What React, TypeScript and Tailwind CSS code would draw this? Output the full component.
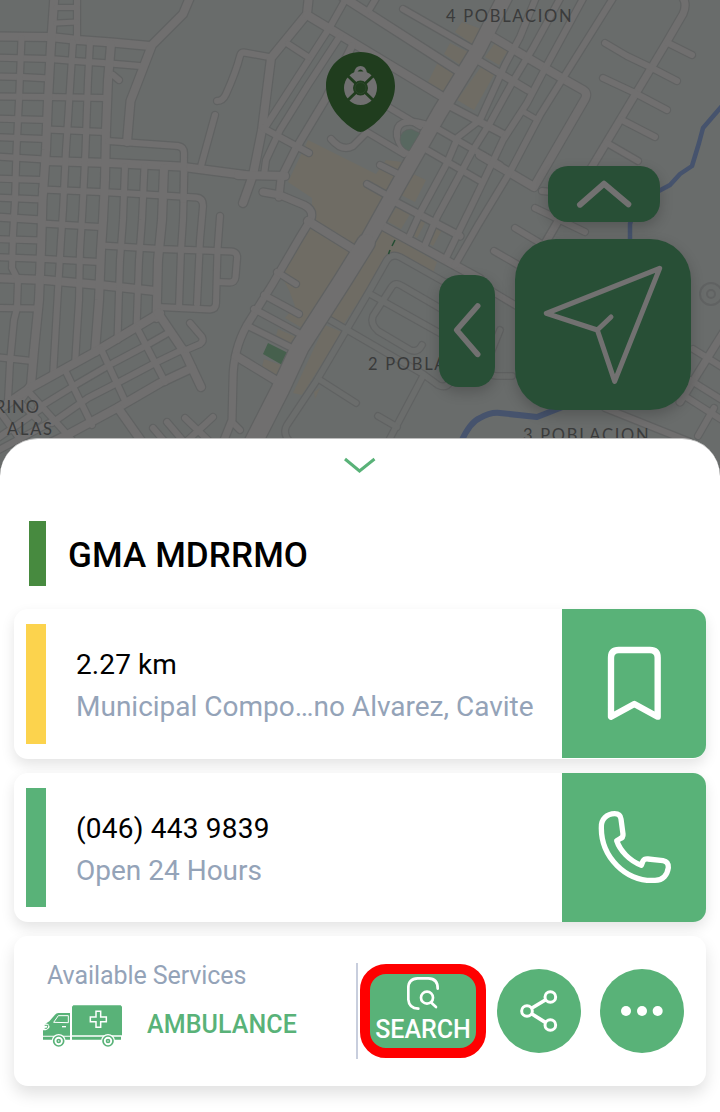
import type { ReactNode } from "react";

type Road = [width: number, d: string];

const ROADS: Road[] = [
  // western grid, east-west streets
  [8, "M-5 36.5L50 37L78 40L112 42.5L150 46"],
  [6, "M-5 57.5L50 59L75 61L110 63.5L140 66"],
  [6, "M-5 76.5L22 77L50 78.5"],
  [6, "M-5 96.5L50 97L105 98"],
  [6, "M-5 118.5L48 120"],
  [6, "M-5 137L45 139"],
  [6, "M47 129.5L105 132"],
  [6, "M-5 156.5L45 159.5"],
  [8, "M45 161L110 163L180 166.5L245 175"],
  [6, "M-5 178.5L42 180"],
  [6, "M42 189.5L100 192L130 193.5L196 197.5Q203 198 203 206L200 240L197 304"],
  [6, "M-5 197.5L42 199.5"],
  [7, "M-5 217L42 220"],
  [6, "M42 223.5L100 227"],
  [6, "M-5 239L42 240.5"],
  [6, "M-5 257L45 259L100 262"],
  [8, "M-5 278L45 280L100 285L155 291"],
  [6, "M-5 308L38 308.5"],
  [6, "M-5 357L32 361"],
  [6, "M102 245.5L160 249L231 251.5Q238 252 237 259L235.500 277Q235 283 229 282.500L217 282"],
  [6, "M158 307L210 309.500Q216 309 216 303L217.500 250L220 216"],
  // western grid, north-south streets
  [6, "M21.500 38L19 100L16.500 150L15 200L13 235L12 268L18 280L17 308L14 320L10 362L8 400"],
  [8, "M54.500 -5L51 45L48 100L46 150L42.500 200L41 250L39 300L34 350L31 385L20 400"],
  [6, "M73 42L70.500 80L68 120L66 150L63 210L61 240L58 290L53 376"],
  [6, "M90 42L88 80L85.500 150L82.500 210L80 250L79 300L75 364"],
  [8, "M111 44L108 80L106 130L105 180L103 220L101 250L99 300L95 352"],
  [6, "M125 166L123 220L120 260L117.500 340"],
  [6, "M144.500 166L142 220L139 260L136.500 328"],
  [8, "M164 168L162 220L158 260L156.500 318"],
  [6, "M184.500 166L183 220L181 250L179 307"],
  [6, "M77 -5L77 38"],
  [5, "M56 7.500L77 7.500"],
  [5, "M56 23L77 22"],
  [8, "M191 -5L183 14L152 45L130.500 101L127 142"],
  [6, "M108 141L178 146Q184 147 184 153L183.500 200"],
  [6, "M113 75L119 80"],
  [6, "M269 57L244 52.500Q241 52 240 56Q236 72 226 94Q223 101 217 101"],
  [6, "M215 115L201 166"],
  // angled blocks in the south west
  [8, "M-5 412L30 388L95 352L160 313"],
  [6, "M38 408L77 384L113 363L147 345L168 333"],
  [6, "M52 423L88 398L123 380L157 362L184 349"],
  [8, "M40 448L67 435L117 408L160 383L192 368"],
  [6, "M28 391L72 440"],
  [6, "M66 372L92 425"],
  [6, "M101 349L126 403"],
  [6, "M137 328L165 382"],
  [8, "M158 313L185 353L201 387"],
  [6, "M186 350L200 344Q204 341 202 337L190 323"],
  [8, "M118 408L142 442"],
  [6, "M-5 440L42 408"],
  [6, "M-5 452L55 420"],
  [6, "M-5 405L22 442"],
  [6, "M15 398L38 420"],
  [6, "M185 418L210 442"],
  [6, "M213 417L188 440"],
  [6, "M167 422L184 442"],
  [6, "M153 428L165 442"],
  [6, "M233 423L240 430"],
  // centre
  [8, "M309 -5L307 14L271 58L262 130L253 175L243 203"],
  [8, "M307 15L443 97"],
  [6, "M348 -5L330 27L264 129"],
  [6, "M340 36L308 85L280 130L266 160L264 175"],
  [7, "M352 46L325 100L295 150L281 178L279 197"],
  [6, "M288 44L308 57"],
  [6, "M263 128L309 153"],
  [8, "M238 175L285 176"],
  [7, "M263 192L280 195L304 205Q314 210 311 219L300 237L272 285L247 325Q233 350 233 380L232 420L222 445"],
  [8, "M340 -5L460 72"],
  [6, "M378 -5L369 10"],
  [6, "M403 9L478 52"],
  [6, "M385 105L420 126"],
  [6, "M331 139Q342 152 353 146L367 132L404 154"],
  [6, "M424 124Q395 116 397 136Q400 148 410 155"],
  [6, "M380 165L404 177"],
  [6, "M367 184L392 198"],
  [8, "M308 221L358 252"],
  [6, "M277 272L296 284"],
  [6, "M264 295L299 314"],
  [6, "M254 309L304 336"],
  [6, "M248 326L300 352"],
  [8, "M236 356L277 381"],
  // city blocks east of the avenue
  [8, "M383 226L480 279"],
  [7, "M388 198L460 236"],
  [6, "M427 150L482 182"],
  [6, "M438 129L500 165"],
  [7, "M446 104L503 134"],
  [7, "M474 58L528 90"],
  [8, "M486 33L560 77L583 90Q588 93 585 99L534 187L480 155"],
  [6, "M537 -5L520 37L505 65L480 120L458 137L447 163L420 213L410 235"],
  [6, "M562 -5L533 48L512 83L490 123L473 150L457 180L437 217L425 245"],
  [6, "M585 -5L548 63L527 103L503 140L495 157L472 205L445 260"],
  [6, "M615 -5L565 75L540 115L510 172L478 225L455 265"],
  [5, "M524 112L536 119"],
  // north-east closes
  [7, "M681 -5Q688 3 683 14L665 45L590 170L557 223L540 252"],
  [6, "M605 43L627 56L650 67L677 81"],
  [6, "M668 43L692 55"],
  [6, "M603 78L633 92L667 110"],
  [6, "M622 120L655 137"],
  [6, "M607 143L638 161"],
  [6, "M535 208L585 232"],
  [6, "M515 228L545 246"],
  [6, "M542 191L552 192"],
  [6, "M494 251L520 266"],
  [6, "M478 283L520 308"],
  [6, "M693 349L730 372"],
  [7, "M728 325L680 402"],
  [6, "M672 388L730 425"],
  [6, "M690 380L722 400"],
  [6, "M605 408L690 442"],
  [6, "M714 408L698 436"],
];

const SERVICE_ROADS: string[] = [
  "M455 288L400 257Q392 253 387 260L370 290L317 380L287 425Q282 433 290 442",
  "M330 320L423 374L438 385Q446 389 450 382",
  "M370 294L445 336",
  "M445 311L402 286Q395 281 391 288L373 316Q370 324 378 331L410 350Q418 353 422 345",
  "M320 380L356 403",
  "M423 376L388 442",
  "M378 416L397 427",
  "M500 330L488 360Q482 375 497 376L512 376",
];

function CityMap() {
  return (
    <svg viewBox="0 0 720 480" className="block h-[480px] w-[720px]" fill="none" aria-hidden="true">
      <rect width="720" height="480" fill="#696c6b" />
      <g fill="#6f6c64">
        <path d="M308 140L376 174L386 160L402 162L396 200L378 212L358 246L312 220V198L288 182Z" />
        <path d="M306 226L352 253L307 331L285 318L295 306L289 290L278 270Z" />
        <path d="M383 230L437 262L433 273L390 254L343 325L330 317Z" />
        <path d="M325 325L342 332L302 395L293 393Z" />
        <path d="M278 329L303 340L296 347L276 336Z M264 359L284 366L277 377L262 367Z" />
        <path d="M438 62L428 82L446 93L458 74Z M450 43L444 54L462 66L470 53Z M462 22L455 32L475 46L484 30Z" />
        <path d="M481 67L494 75L474 110L457 100Z M497 40L508 50L499 65L485 57Z M413 174L426 180L415 202L401 195Z" />
        <path d="M400 202L412 211L401 229L387 221Z M417 213L427 219L417 238L407 231Z M432 224L442 230L433 246L424 240Z" />
        <path d="M314 392L320 388L315 399Z" />
      </g>
      <path d="M268 343L290 354L284 366L263 354Z" fill="#46604d" />
      <g stroke="#606262" strokeLinecap="round" strokeLinejoin="round" strokeWidth="8">
        {SERVICE_ROADS.map((d) => (
          <path key={d} d={d} />
        ))}
      </g>
      <g stroke="#6b6d6c" strokeLinecap="round" strokeLinejoin="round" strokeWidth="5.600">
        {SERVICE_ROADS.map((d) => (
          <path key={d} d={d} />
        ))}
      </g>
      <g stroke="#606262" strokeLinecap="round" strokeLinejoin="round">
        {ROADS.map(([w, d]) => (
          <path key={d} d={d} strokeWidth={w + 2.4} />
        ))}
        <path d="M506 -5L478 50L440 112L400 182L365 245" strokeWidth="17" />
        <path d="M366 243L343 280L300 347L280 390L252 445" strokeWidth="20" />
        <circle cx="711" cy="294" r="11" strokeWidth="2" />
      </g>
      <g stroke="#706f6f" strokeLinecap="round" strokeLinejoin="round">
        {ROADS.map(([w, d]) => (
          <path key={d} d={d} strokeWidth={w} />
        ))}
        <path d="M506 -5L478 50L440 112L400 182L365 245" strokeWidth="14.500" />
        <path d="M366 243L343 280L300 347L280 390L252 445" strokeWidth="17.500" />
      </g>
      <path d="M400 140Q400 130 411 129L420 133L409 151Q401 148 400 140Z" fill="#586860" stroke="#606262" strokeWidth="0.700" />
      <circle cx="711" cy="294" r="4" stroke="#606262" strokeWidth="2" />
      <path d="M395 240L392 246M390 250L388.500 254" stroke="#254d33" strokeWidth="1.500" />
      <g stroke="#46536d" strokeWidth="4.500" strokeLinejoin="round">
        <path d="M722 106L703 128L699 143L692 166L680 174L670 185L655 193L636 205L630 224V245" />
        <path d="M461 442Q470 422 480 418Q490 412 500 413L537 417L565 406" strokeWidth="6" />
      </g>
      <g fill="#3a3b3b" className="font-['Lato',sans-serif] text-[16.5px]">
        <text x="446" y="21.500" textLength="125.500">4 POBLACION</text>
        <text x="368" y="369.500" textLength="125.500">2 POBLACION</text>
        <text x="523" y="440.500" textLength="125.500">3 POBLACION</text>
        <text x="-5" y="412.500" textLength="44">RINO</text>
        <text x="7" y="435" textLength="45">ALAS</text>
      </g>
      <path d="M360.500 52C380 52 395 67 395 86C395 104 381 121 366 130Q360.500 134 355 130C340 121 326 104 326 86C326 67 341 52 360.500 52Z" fill="#203d1e" />
      <ellipse cx="360.500" cy="88" rx="16.500" ry="17" fill="#707070" />
      <path d="M354 73Q355 66 360.500 66Q366 66 367 73Z" fill="#707070" />
      <path d="M357.500 71.500Q360.500 67.500 363.500 71.500Z" fill="#203d1e" />
      <path d="M348 76L373 100M373 76L348 100" stroke="#203d1e" strokeWidth="3" />
      <circle cx="360.500" cy="88" r="7.500" fill="#203d1e" />
      <circle cx="360.500" cy="88" r="5.500" stroke="#2b472a" strokeWidth="1" />
    </svg>
  );
}

function MapControls() {
  const base = "absolute bg-[#284f36] shadow-[0_5px_14px_rgba(0,0,0,0.2)]";
  return (
    <>
      <button aria-label="Up" className={`${base} top-[166px] left-[548px] h-14 w-28 rounded-[20px]`}>
        <svg viewBox="204 498 336 168" className="h-14 w-28" fill="none" stroke="#727171" strokeWidth="18" strokeLinecap="round" strokeLinejoin="round">
          <path d="M300 614L372 551L445 613" />
        </svg>
      </button>
      <button aria-label="Left" className={`${base} top-[275px] left-[439px] h-28 w-14 rounded-[20px]`}>
        <svg viewBox="597 135 168 336" className="h-28 w-14" fill="none" stroke="#727171" strokeWidth="17" strokeLinecap="round" strokeLinejoin="round">
          <path d="M713 228L650 300L713 373" />
        </svg>
      </button>
      <button aria-label="Navigate" className={`${base} top-[239px] left-[515px] h-[171px] w-44 rounded-[41px]`}>
        <svg viewBox="105 27 528 513" className="h-[171px] w-44" fill="none" stroke="#727171" strokeWidth="15" strokeLinecap="round" strokeLinejoin="round">
          <path d="M539 115L199 250L352 300L404 454ZM352 300L393 261" />
        </svg>
      </button>
    </>
  );
}

function BookmarkIcon() {
  return (
    <svg viewBox="66 27 432 447" className="h-[149px] w-36" fill="none" stroke="white" strokeWidth="19" strokeLinecap="round" strokeLinejoin="round">
      <path d="M213 350V173Q213 150 236 150H330Q353 150 353 173V350L283 312Z" />
    </svg>
  );
}

function PhoneIcon() {
  return (
    <svg viewBox="66 519 432 447" className="h-[149px] w-36" fill="none" stroke="white" strokeWidth="16" strokeLinejoin="round">
      <path d="M184 684C182 657 202 641 224 641Q241 641 243 657L249 702Q250 713 240 716L230 722C240 752 268 782 304 796L309 783Q313 776 324 777L369 782Q386 785 385 803C382 824 370 841 345 841C256 846 184 770 184 684Z" />
    </svg>
  );
}

function AmbulanceIcon() {
  return (
    <svg viewBox="126 222 243 132" className="h-11 w-[81px]" fill="#59b278">
      <path d="M220 226H362L366 230V316H216V230Z" />
      <path d="M129 317V301Q143 302 149 291Q146 279 136 281L148 274L165 254Q169 249 175 249H210V317Z" />
      <path d="M129 320H210V329H129ZM216 320H363V329H216Z" />
      <path d="M161 277L175 257H205V278Z" fill="none" stroke="white" strokeWidth="3" />
      <path d="M186 290H198" stroke="white" strokeWidth="4" />
      <path d="M134 286H144L141 295H134" fill="none" stroke="#59b278" strokeWidth="3" />
      <path d="M288 244H302V261H319V275H302V292H288V275H271V261H288Z" fill="none" stroke="white" strokeWidth="4.500" />
      {[176, 324].map((cx) => (
        <g key={cx}>
          <circle cx={cx} cy="333" r="21" fill="white" />
          <circle cx={cx} cy="333" r="15" fill="white" stroke="#59b278" strokeWidth="5" />
          <circle cx={cx} cy="333" r="7" />
          <circle cx={cx} cy="333" r="2" fill="white" />
        </g>
      ))}
    </svg>
  );
}

interface InfoCardProps {
  size: string;
  bar: string;
  title: string;
  titleSpacing: string;
  subtitle: string;
  label: string;
  icon: ReactNode;
}

function InfoCard({ size, bar, title, titleSpacing, subtitle, label, icon }: InfoCardProps) {
  return (
    <div className={`flex shrink-0 rounded-[14px] bg-white shadow-[0_6px_14px_rgba(0,0,0,0.11)] ${size}`}>
      <div className={`mt-[15px] ml-3 w-5 ${bar}`} />
      <div className="flex flex-1 flex-col pt-[35px] pl-[30px] text-[28px] leading-[42px] whitespace-nowrap">
        <span className={`text-black ${titleSpacing}`}>{title}</span>
        <span className="text-[#94a3b8]">{subtitle}</span>
      </div>
      <button aria-label={label} className="h-[149px] w-36 rounded-r-[13px] bg-[#59b278]">
        {icon}
      </button>
    </div>
  );
}

export default function App() {
  return (
    <main className="flex h-[1112px] w-[720px] flex-col overflow-hidden bg-white font-['Roboto',sans-serif]">
      <section className="relative h-[480px] shrink-0">
        <CityMap />
        <MapControls />
      </section>
      <section className="relative -mt-[42px] flex flex-1 flex-col rounded-t-[38px] border-t border-[#bdbdbd] bg-white">
        <svg viewBox="0 0 32 18" className="mt-[18px] ml-[344px] h-[18px] w-8" fill="none" stroke="#59b278" strokeWidth="3">
          <path d="M1 2L15.500 14L30.500 2" />
        </svg>
        <div className="mt-[46px] ml-[29px] flex h-[65px] items-center">
          <div className="h-[65px] w-[17px] bg-[#478a3f]" />
          <h1 className="ml-[22px] pt-[5px] text-[35px] leading-[42px] font-medium tracking-[0.12px] text-black">GMA MDRRMO</h1>
        </div>
        <div className="mt-[23px] flex flex-col gap-3.5 px-3.5">
          <InfoCard size="h-[150px]" bar="h-[120px] bg-[#fcd34d]" title="2.27 km" titleSpacing="tracking-[0.1px]" subtitle="Municipal Compo…no Alvarez, Cavite" label="Save" icon={<BookmarkIcon />} />
          <InfoCard size="h-[149px]" bar="h-[119px] bg-[#59b278]" title="(046) 443 9839" titleSpacing="tracking-[0.22px]" subtitle="Open 24 Hours" label="Call" icon={<PhoneIcon />} />
          <div className="flex h-[150px] rounded-[14px] bg-white shadow-[0_8px_16px_rgba(0,0,0,0.12)]">
            <div className="w-[342px] pt-[25px] pl-7">
              <p className="pl-[5px] text-[25px] leading-[30px] tracking-[-0.08px] text-[#94a3b8]">Available Services</p>
              <div className="mt-[13px] flex items-center">
                <AmbulanceIcon />
                <span className="ml-6 pb-0.5 text-[25px] leading-[30px] font-medium tracking-[0.1px] text-[#59b278]">AMBULANCE</span>
              </div>
            </div>
            <div className="mt-[27px] h-24 w-0.5 bg-[#c8cedd]" />
            <div className="mt-7 ml-0.5 flex h-[94px] items-center">
              <button className="flex h-[94px] w-[126px] flex-col items-center rounded-[26px] border-10 border-[#ff0000] bg-[#59b278]">
                <svg viewBox="165 135 108 108" className="mt-px h-9 w-9 shrink-0" fill="none" stroke="white" strokeWidth="8" strokeLinecap="round">
                  <path d="M263 176Q264 146 235 145H203Q175 146 175 174V209Q177 235 205 236" />
                  <circle cx="231" cy="203" r="18" />
                  <path d="M245 219L258 231" />
                </svg>
                <span className="mt-1 text-[25px] leading-[30px] font-medium text-white">SEARCH</span>
              </button>
              <button aria-label="Share" className="ml-[11px] h-21 w-21 rounded-full bg-[#59b278]">
                <svg viewBox="441 117 252 252" className="h-21 w-21" fill="none" stroke="white" strokeWidth="9">
                  <path d="M546 234L586 210M546 252L586 277" strokeWidth="11" />
                  <circle cx="531" cy="243" r="16" />
                  <circle cx="601" cy="201" r="16" />
                  <circle cx="601" cy="285" r="16" />
                </svg>
              </button>
              <button aria-label="More" className="ml-[19px] h-21 w-21 rounded-full bg-[#59b278]">
                <svg viewBox="750 117 252 252" className="h-21 w-21" fill="white">
                  <circle cx="828" cy="243" r="15" />
                  <circle cx="876" cy="243" r="15" />
                  <circle cx="923" cy="243" r="15" />
                </svg>
              </button>
            </div>
          </div>
        </div>
      </section>
    </main>
  );
}
